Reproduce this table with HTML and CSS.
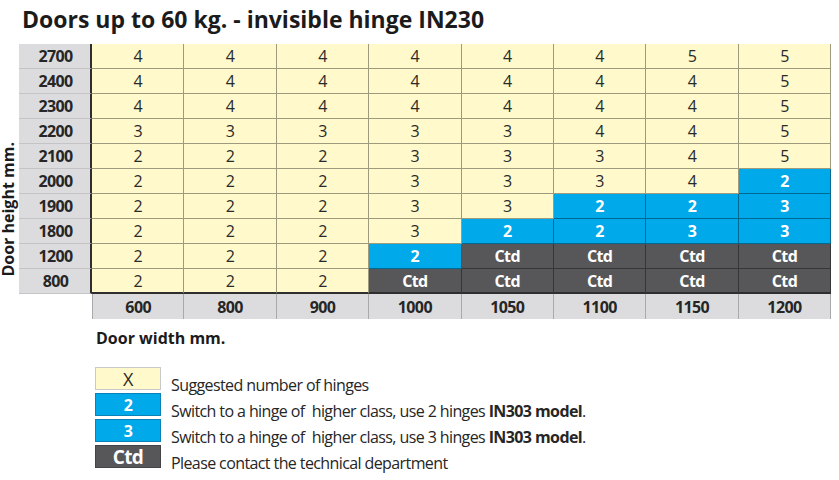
FILE: index.html
```html
<!DOCTYPE html>
<html>
<head>
<meta charset="utf-8">
<link rel="stylesheet" href="styles.css">
</head>
<body>
<h1 class="title">Doors up to 60 kg. - invisible hinge IN230</h1>
<div class="chart">
  <div class="ylabel">Door height mm.</div>
  <div class="grid">
    <div class="rh">2700</div><div class="c">4</div><div class="c">4</div><div class="c">4</div><div class="c">4</div><div class="c">4</div><div class="c">4</div><div class="c">5</div><div class="c">5</div>
    <div class="rh">2400</div><div class="c">4</div><div class="c">4</div><div class="c">4</div><div class="c">4</div><div class="c">4</div><div class="c">4</div><div class="c">4</div><div class="c">5</div>
    <div class="rh">2300</div><div class="c">4</div><div class="c">4</div><div class="c">4</div><div class="c">4</div><div class="c">4</div><div class="c">4</div><div class="c">4</div><div class="c">5</div>
    <div class="rh">2200</div><div class="c">3</div><div class="c">3</div><div class="c">3</div><div class="c">3</div><div class="c">3</div><div class="c">4</div><div class="c">4</div><div class="c">5</div>
    <div class="rh">2100</div><div class="c">2</div><div class="c">2</div><div class="c">2</div><div class="c">3</div><div class="c">3</div><div class="c">3</div><div class="c">4</div><div class="c">5</div>
    <div class="rh">2000</div><div class="c">2</div><div class="c">2</div><div class="c">2</div><div class="c">3</div><div class="c">3</div><div class="c">3</div><div class="c">4</div><div class="c blue">2</div>
    <div class="rh">1900</div><div class="c">2</div><div class="c">2</div><div class="c">2</div><div class="c">3</div><div class="c">3</div><div class="c blue">2</div><div class="c blue">2</div><div class="c blue">3</div>
    <div class="rh">1800</div><div class="c">2</div><div class="c">2</div><div class="c">2</div><div class="c">3</div><div class="c blue">2</div><div class="c blue">2</div><div class="c blue">3</div><div class="c blue">3</div>
    <div class="rh">1200</div><div class="c">2</div><div class="c">2</div><div class="c">2</div><div class="c blue">2</div><div class="c dark">Ctd</div><div class="c dark">Ctd</div><div class="c dark">Ctd</div><div class="c dark">Ctd</div>
    <div class="rh">800</div><div class="c last">2</div><div class="c last">2</div><div class="c last">2</div><div class="c last dark">Ctd</div><div class="c last dark">Ctd</div><div class="c last dark">Ctd</div><div class="c last dark">Ctd</div><div class="c last dark">Ctd</div>
    <div class="blank"></div><div class="ch first">600</div><div class="ch">800</div><div class="ch">900</div><div class="ch">1000</div><div class="ch">1050</div><div class="ch">1100</div><div class="ch">1150</div><div class="ch">1200</div>
  </div>
</div>
<div class="xlabel">Door width mm.</div>
<div class="legend">
  <div class="box box-x">X</div><div class="ltext">Suggested number of hinges</div>
  <div class="box box-blue">2</div><div class="ltext">Switch to a hinge of&nbsp; higher class, use 2 hinges <b>IN303 model</b>.</div>
  <div class="box box-blue">3</div><div class="ltext">Switch to a hinge of&nbsp; higher class, use 3 hinges <b>IN303 model</b>.</div>
  <div class="box box-dark">Ctd</div><div class="ltext">Please contact the technical department</div>
</div>
</body>
</html>
```
FILE: styles.css
```css
html, body {
  margin: 0;
  padding: 0;
  background: #ffffff;
  font-family: "Open Sans", "Noto Sans", sans-serif;
  color: #222222;
}

body {
  padding-bottom: 10px;
}

.title {
  margin: 4px 0 9px 22px;
  font-size: 23px;
  line-height: 31px;
  font-weight: 700;
  color: #1b1b1b;
}

.chart {
  display: flex;
  align-items: flex-end;
}

.ylabel {
  width: 19px;
  writing-mode: vertical-rl;
  transform: rotate(180deg);
  font-size: 16px;
  font-weight: 700;
  line-height: 16px;
  margin-bottom: 42px;
  white-space: nowrap;
  color: #1b1b1b;
}

.grid {
  display: grid;
  grid-template-columns: 73px repeat(8, 92.4px);
  grid-auto-rows: 25px;
  font-size: 16px;
  letter-spacing: -0.6px;
}

.grid > div {
  box-sizing: border-box;
  display: flex;
  align-items: center;
  justify-content: center;
}

.rh {
  background: #dcdcde;
  font-weight: 700;
  color: #262626;
  border-bottom: 1px solid #c4c4c6;
  border-right: 2px solid #2e2e2e;
  padding-left: 2px;
}

.c {
  background: #fff9cb;
  color: #2a2a2a;
  border-right: 1px solid rgba(0, 0, 0, 0.38);
  border-bottom: 1px solid rgba(0, 0, 0, 0.38);
}

.c.blue {
  background: #00a9ea;
  color: #ffffff;
  font-weight: 700;
}

.c.dark {
  background: #575759;
  color: #ffffff;
  font-weight: 700;
}

.c.last {
  border-bottom: 2px solid #2e2e2e;
}

.blank {
  background: #ffffff;
}

.ch {
  background: #dcdcde;
  font-weight: 700;
  color: #262626;
  border-right: 1px solid #a9a9ab;
}

.ch.first {
  border-left: 1px solid #a9a9ab;
}

.xlabel {
  margin: 9px 0 0 96px;
  font-size: 16px;
  line-height: 20px;
  font-weight: 700;
  color: #1b1b1b;
}

.legend {
  margin: 19px 0 0 95px;
  display: grid;
  grid-template-columns: 66px auto;
  grid-auto-rows: 23px;
  column-gap: 10px;
  row-gap: 3px;
  justify-content: start;
  letter-spacing: -0.6px;
}

.box {
  box-sizing: border-box;
  display: flex;
  align-items: center;
  justify-content: center;
  font-weight: 700;
  color: #ffffff;
  font-size: 16px;
}

.box-x {
  background: #fff9cb;
  border: 1px solid #c9c9c9;
  color: #2a2a2a;
  font-weight: 400;
  font-size: 18px;
}

.box-blue {
  background: #00a9ea;
  border: 1px solid #0a82b8;
}

.box-dark {
  background: #575759;
  border: 1px solid #444446;
  font-size: 19px;
}

.ltext {
  font-size: 16px;
  line-height: 20px;
  margin-top: 8px;
  white-space: nowrap;
  color: #262626;
}
```
